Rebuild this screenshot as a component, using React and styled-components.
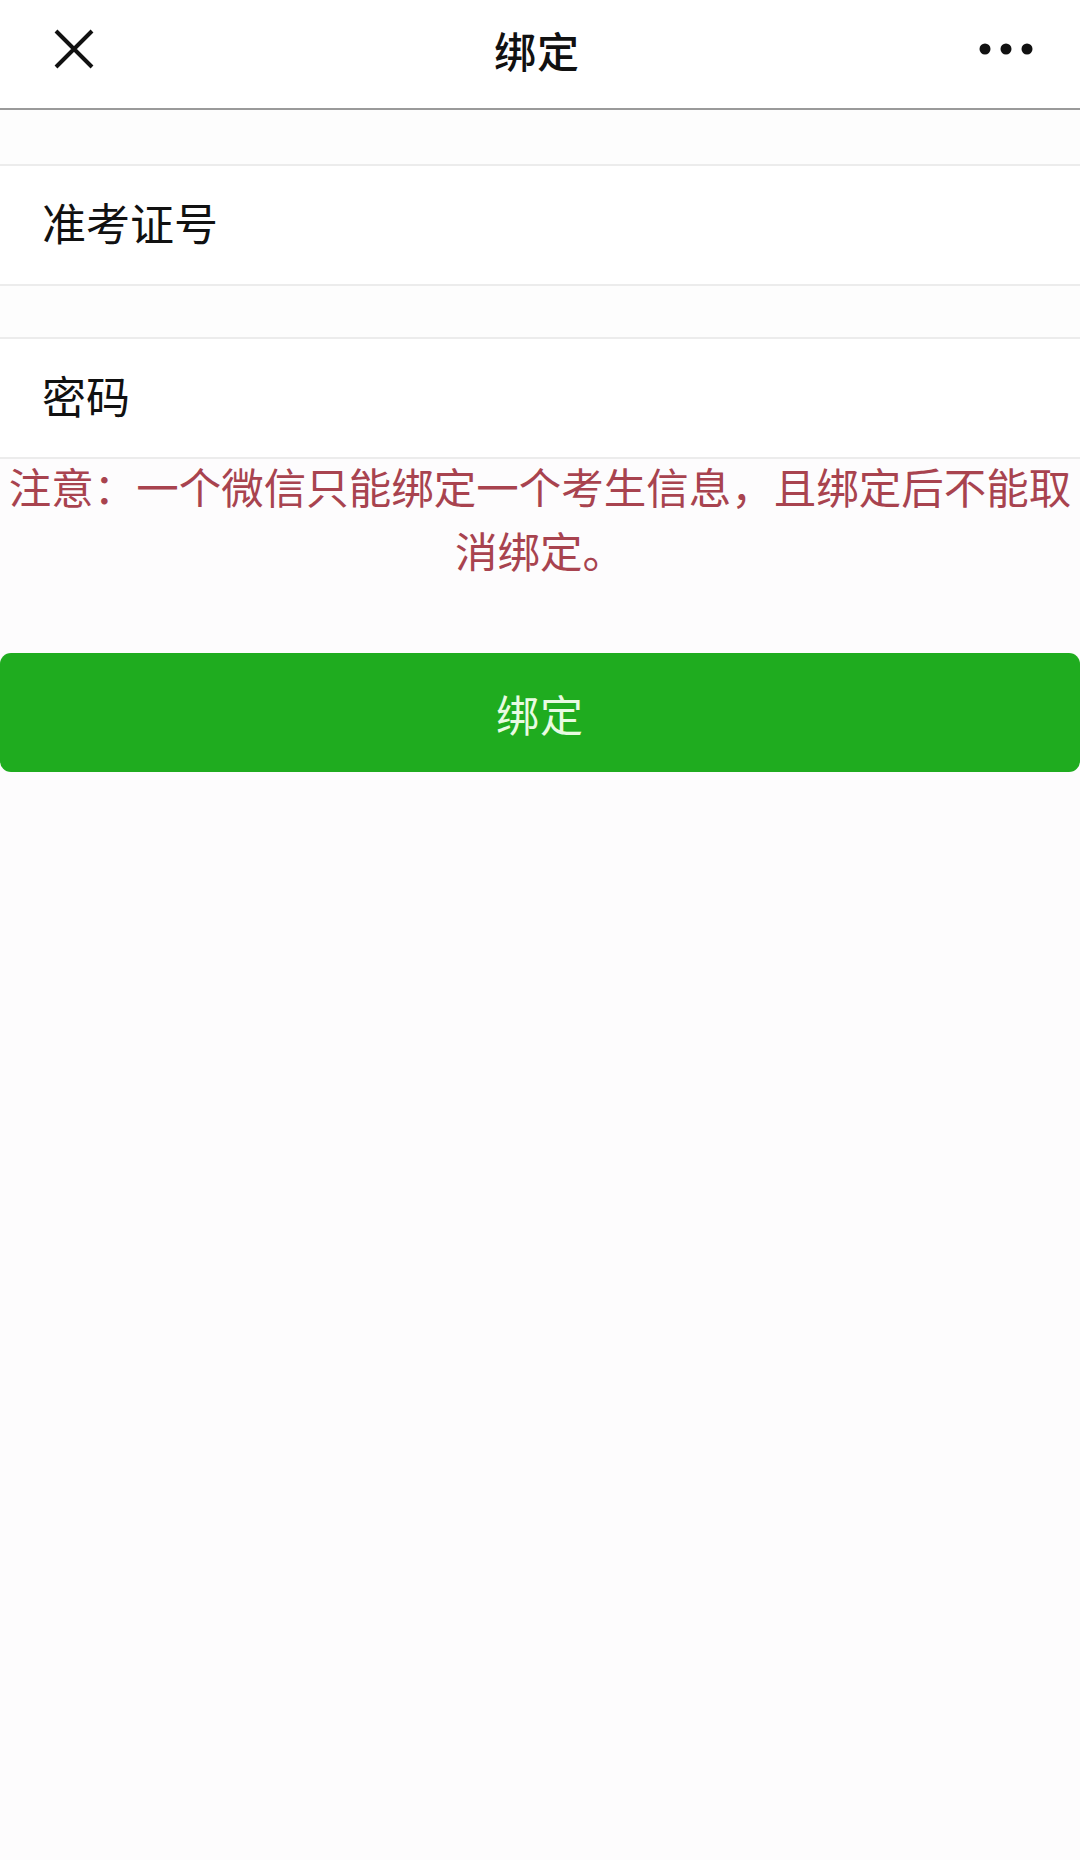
import React from "react";
import styled, { createGlobalStyle } from "styled-components";

const GlobalStyle = createGlobalStyle`
  html, body {
    margin: 0;
    padding: 0;
    background: #fdfcfd;
    font-family: "Noto Sans CJK SC", "Noto Sans", sans-serif;
  }
`;

const Page = styled.div`
  width: 1080px;
  min-height: 1860px;
  background: #fdfcfd;
  display: flex;
  flex-direction: column;
`;

const NavBar = styled.div`
  height: 110px;
  box-sizing: border-box;
  background: #ffffff;
  display: flex;
  align-items: center;
  justify-content: space-between;
  padding: 0 46px 10px 52px;
  border-bottom: 2px solid #9a9a9a;
`;

const IconButton = styled.div`
  width: 44px;
  height: 44px;
  display: flex;
  align-items: center;
  justify-content: center;
`;

const NavTitle = styled.div`
  font-size: 42px;
  font-weight: 500;
  color: #111;
  letter-spacing: 1px;
`;

const Spacer = styled.div`
  height: ${(p) => p.h}px;
  background: #fdfdfd;
  border-bottom: 2px solid #ececec;
`;

const Field = styled.div`
  height: 120px;
  box-sizing: border-box;
  background: #ffffff;
  display: flex;
  align-items: center;
  padding: 0 42px 6px;
  font-size: 44px;
  color: #111;
  border-bottom: 2px solid #ececec;
`;

const Notice = styled.p`
  margin: -5px 0 0;
  padding: 0 4px;
  font-size: 42.5px;
  line-height: 64px;
  color: #a8434f;
  text-align: center;
  letter-spacing: 0;
`;

const SubmitButton = styled.button`
  margin-top: 71px;
  height: 119px;
  width: 1080px;
  border: none;
  border-radius: 11px;
  background: #1fac1f;
  color: #e8fbe2;
  font-family: "Noto Sans CJK SC", "Noto Sans", sans-serif;
  font-size: 43px;
  letter-spacing: 1px;
`;

function CloseIcon() {
  return (
    <svg width="44" height="44" viewBox="0 0 44 44">
      <path d="M4 4 L40 40 M40 4 L4 40" stroke="#111" strokeWidth="4" />
    </svg>
  );
}

function MoreIcon() {
  return (
    <svg width="56" height="14" viewBox="0 0 56 14">
      <circle cx="7" cy="7" r="5.5" fill="#111" />
      <circle cx="28" cy="7" r="5.5" fill="#111" />
      <circle cx="49" cy="7" r="5.5" fill="#111" />
    </svg>
  );
}

export default function App() {
  return (
    <Page>
      <GlobalStyle />
      <NavBar>
        <IconButton>
          <CloseIcon />
        </IconButton>
        <NavTitle>绑定</NavTitle>
        <MoreIcon />
      </NavBar>
      <Spacer h={54} />
      <Field>准考证号</Field>
      <Spacer h={51} />
      <Field>密码</Field>
      <Notice>
        注意：一个微信只能绑定一个考生信息，且绑定后不能取消绑定。
      </Notice>
      <SubmitButton type="button">绑定</SubmitButton>
    </Page>
  );
}
